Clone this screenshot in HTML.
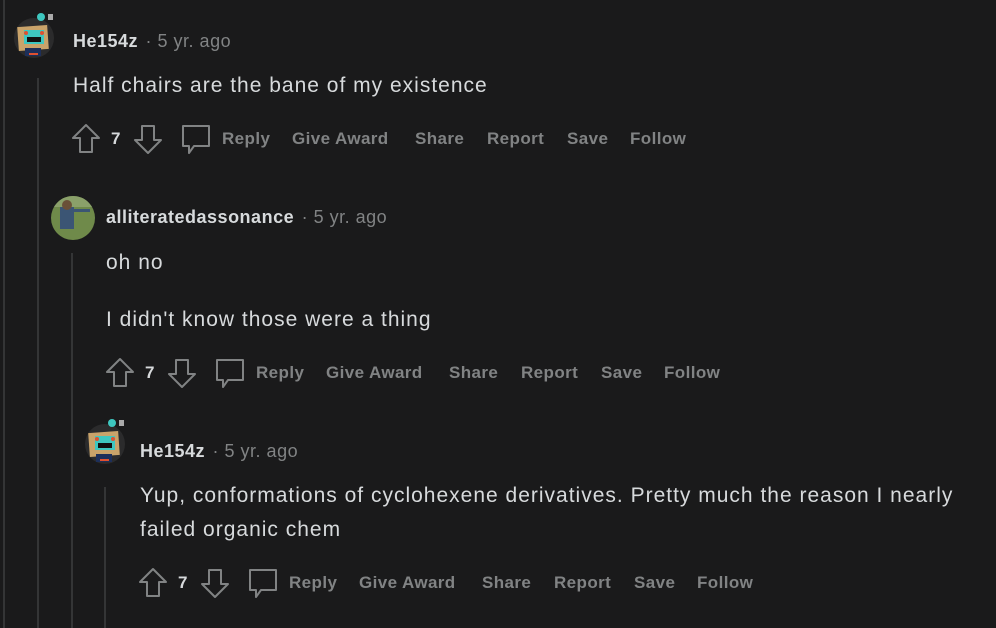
<!DOCTYPE html>
<html><head><meta charset="utf-8"><style>
body{margin:0;width:996px;height:628px;background:#1a1a1b;position:relative;overflow:hidden;font-family:"Liberation Sans",sans-serif;}
.l{position:absolute;width:2px;background:#343536;}
.a{position:absolute;white-space:nowrap;}
.u{font-size:18px;color:#d7dadc;font-weight:bold;letter-spacing:0.5px;}
.u span{font-weight:normal;color:#818384;}
.b{font-size:21px;color:#d7dadc;letter-spacing:1px;}
.act{position:absolute;height:32px;font-size:17px;font-weight:bold;color:#818384;letter-spacing:0.4px;}
.act *{position:absolute;white-space:nowrap;}
</style></head><body>
<div class="l" style="left:3px;top:0;height:628px"></div>
<div class="l" style="left:37px;top:78px;height:550px"></div>
<div class="l" style="left:71px;top:253px;height:375px"></div>
<div class="l" style="left:104px;top:487px;height:141px"></div>

<svg width="0" height="0" style="position:absolute">
<defs>
<g id="av1">
<circle cx="22" cy="26" r="20" fill="#2b2b2c"/>
<rect x="6" y="14" width="30" height="24" fill="#c9a36a" transform="rotate(-4 21 26)"/>
<rect x="12" y="18" width="20" height="14" fill="#3ec7c0"/>
<rect x="15" y="25" width="14" height="5" fill="#111"/>
<circle cx="14" cy="21" r="2" fill="#e05030"/><circle cx="30" cy="21" r="2" fill="#e05030"/>
<rect x="13" y="36" width="16" height="8" fill="#1d2f5a"/>
<rect x="17" y="41" width="9" height="2" fill="#e05030"/>
<circle cx="29" cy="5" r="4" fill="#3ec7c0"/>
<rect x="36" y="2" width="5" height="6" fill="#aaa"/>
</g>
<g id="up">
<path d="M15 2 L2 15 H9 V29 H21 V15 H28 Z" fill="none" stroke="#818384" stroke-width="2" stroke-linejoin="round"/>
</g>
<g id="dn">
<path d="M15 30 L2 17 H9 V3 H21 V17 H28 Z" fill="none" stroke="#818384" stroke-width="2" stroke-linejoin="round"/>
</g>
<g id="cm">
<path d="M3 3 H29 V23 H14 L9 30 V23 H3 Z" fill="none" stroke="#818384" stroke-width="2" stroke-linejoin="round"/>
</g>
</defs></svg>

<!-- comment 1 -->
<svg class="a" style="left:12px;top:12px" width="46" height="48"><use href="#av1"/></svg>
<div class="a u" style="left:73px;top:31px">He154z <span style="margin-left:2px">·&nbsp;5 yr. ago</span></div>
<div class="a b" style="left:73px;top:74px">Half chairs are the bane of my existence</div>

<!-- comment 2 -->
<svg class="a" style="left:50px;top:195px" width="46" height="46"><defs><clipPath id="c2"><circle cx="23" cy="23" r="22"/></clipPath></defs><g clip-path="url(#c2)"><rect width="46" height="46" fill="#6f8a4a"/><rect width="46" height="12" fill="#8aa06a"/><rect x="10" y="12" width="14" height="22" fill="#3b5574"/><circle cx="17" cy="10" r="5" fill="#6a5038"/><rect x="22" y="14" width="18" height="3" fill="#3b5574"/></g></svg>
<div class="a u" style="left:106px;top:207px">alliteratedassonance <span style="margin-left:2px">·&nbsp;5 yr. ago</span></div>
<div class="a b" style="left:106px;top:251px">oh no</div>
<div class="a b" style="left:106px;top:308px">I didn't know those were a thing</div>

<!-- comment 3 -->
<svg class="a" style="left:83px;top:418px" width="46" height="48"><use href="#av1"/></svg>
<div class="a u" style="left:140px;top:441px">He154z <span style="margin-left:2px">·&nbsp;5 yr. ago</span></div>
<div class="a b" style="left:140px;top:484px">Yup, conformations of cyclohexene derivatives. Pretty much the reason I nearly</div>
<div class="a b" style="left:140px;top:518px">failed organic chem</div>

<!-- action rows -->
<div class="act" style="left:71px;top:123px"><svg style="left:0;top:0" width="30" height="32"><use href="#up"/></svg><span style="left:40px;top:6px;color:#d7dadc">7</span><svg style="left:62px;top:0" width="30" height="32"><use href="#dn"/></svg><svg style="left:109px;top:0" width="32" height="33"><use href="#cm"/></svg><span style="left:151px;top:6px">Reply</span><span style="left:221px;top:6px">Give Award</span><span style="left:344px;top:6px">Share</span><span style="left:416px;top:6px">Report</span><span style="left:496px;top:6px">Save</span><span style="left:559px;top:6px">Follow</span></div>
<div class="act" style="left:105px;top:357px"><svg style="left:0;top:0" width="30" height="32"><use href="#up"/></svg><span style="left:40px;top:6px;color:#d7dadc">7</span><svg style="left:62px;top:0" width="30" height="32"><use href="#dn"/></svg><svg style="left:109px;top:0" width="32" height="33"><use href="#cm"/></svg><span style="left:151px;top:6px">Reply</span><span style="left:221px;top:6px">Give Award</span><span style="left:344px;top:6px">Share</span><span style="left:416px;top:6px">Report</span><span style="left:496px;top:6px">Save</span><span style="left:559px;top:6px">Follow</span></div>
<div class="act" style="left:138px;top:567px"><svg style="left:0;top:0" width="30" height="32"><use href="#up"/></svg><span style="left:40px;top:6px;color:#d7dadc">7</span><svg style="left:62px;top:0" width="30" height="32"><use href="#dn"/></svg><svg style="left:109px;top:0" width="32" height="33"><use href="#cm"/></svg><span style="left:151px;top:6px">Reply</span><span style="left:221px;top:6px">Give Award</span><span style="left:344px;top:6px">Share</span><span style="left:416px;top:6px">Report</span><span style="left:496px;top:6px">Save</span><span style="left:559px;top:6px">Follow</span></div>
</body></html>
